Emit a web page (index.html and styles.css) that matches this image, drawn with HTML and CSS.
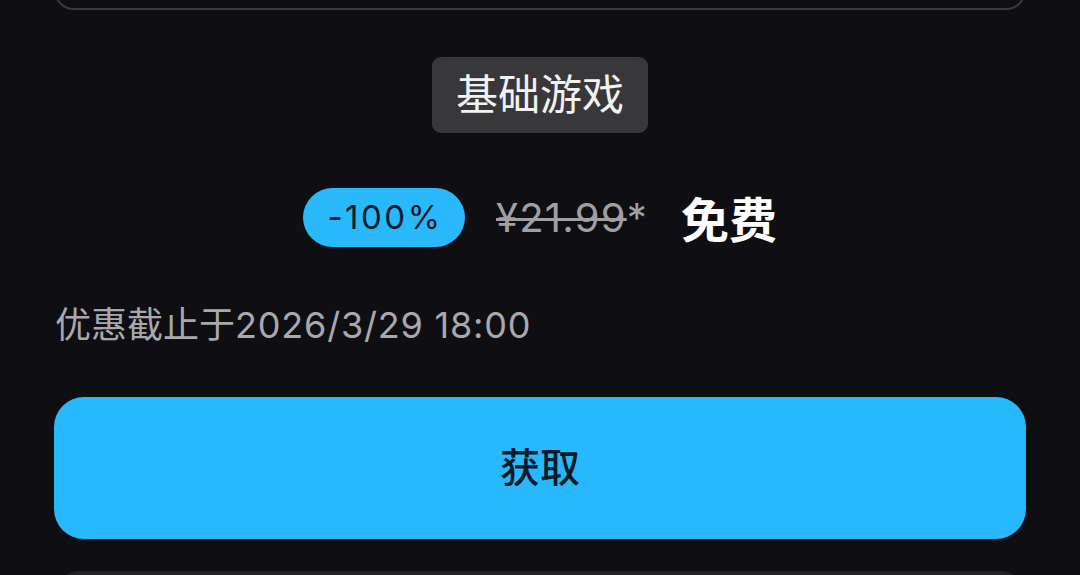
FILE: index.html
```html
<!DOCTYPE html>
<html lang="zh-CN">
<head>
<meta charset="utf-8">
<link rel="stylesheet" href="styles.css">
</head>
<body>
<div class="page">
  <div class="top-card"></div>
  <div class="tag-wrap"><span class="tag">基础游戏</span></div>
  <div class="price-row">
    <span class="pill">-100%</span>
    <span class="old-price"><s>¥21.99</s>*</span>
    <span class="free">免费</span>
  </div>
  <div class="date">优惠截止于<span class="num">2026/3/29 18:00</span></div>
  <div class="get-btn">获取</div>
  <div class="bottom-card"></div>
</div>
</body>
</html>
```
FILE: styles.css
```css
html, body {
  margin: 0;
  padding: 0;
  background: #0f0f13;
  overflow: hidden;
  height: 575px;
}
body {
  font-family: "Inter", "Noto Sans CJK SC", sans-serif;
  color: #f0f0f0;
}
.page {
  padding: 0 54px;
  width: 1080px;
  height: 575px;
  overflow: hidden;
  box-sizing: border-box;
}
.top-card {
  height: 40px;
  margin-top: -30px;
  border: 2px solid #3a3a40;
  border-radius: 26px;
  box-sizing: border-box;
}
.tag-wrap {
  display: flex;
  justify-content: center;
  margin-top: 47px;
}
.tag {
  display: block;
  height: 76px;
  line-height: 76px;
  padding: 0 24px;
  background: #38383b;
  border-radius: 9px;
  font-size: 42px;
  color: #f2f2f2;
}
.price-row {
  display: flex;
  justify-content: center;
  align-items: center;
  margin-top: 54px;
  height: 60px;
}
.pill {
  display: flex;
  align-items: center;
  justify-content: center;
  width: 162px;
  height: 59px;
  border-radius: 30px;
  background: #29b8fa;
  color: #0b1a2a;
  font-size: 33px;
  letter-spacing: 2.5px;
  padding-left: 2px;
  box-sizing: border-box;
}
.old-price {
  margin-left: 31px;
  font-size: 40px;
  letter-spacing: 1.2px;
  color: #a0a0a4;
}
.old-price s {
  text-decoration-thickness: 3px;
  text-decoration-color: #a0a0a4;
}
.free {
  margin-left: 33px;
  font-family: "Noto Sans CJK SC", sans-serif;
  font-size: 48px;
  font-weight: 700;
  color: #ffffff;
}
.date {
  margin-top: 58px;
  height: 40px;
  line-height: 40px;
  font-size: 36px;
  color: #a9a9ad;
  padding-left: 1px;
}
.num {
  letter-spacing: 0.8px;
}
.get-btn {
  margin-top: 52px;
  height: 142px;
  border-radius: 30px;
  background: #28b9fd;
  display: flex;
  align-items: center;
  justify-content: center;
  font-size: 40px;
  font-weight: 500;
  color: #0b1a28;
  padding-bottom: 6px;
  box-sizing: border-box;
}
.bottom-card {
  margin-top: 32px;
  height: 60px;
  border-radius: 26px;
  background: #232326;
}
```
